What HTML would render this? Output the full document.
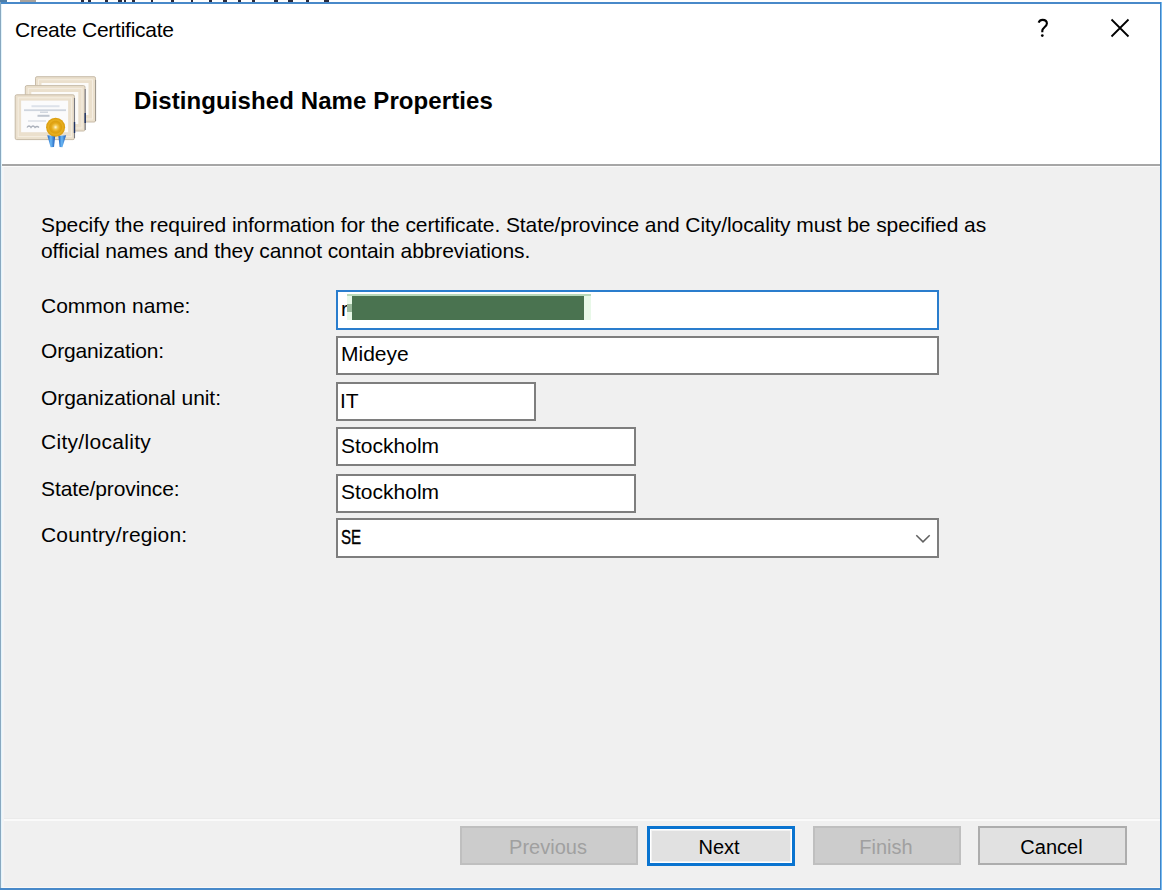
<!DOCTYPE html>
<html><head><meta charset="utf-8">
<style>
html,body{margin:0;padding:0;}
body{width:1162px;height:892px;position:relative;overflow:hidden;background:#fff;font-family:"Liberation Sans",sans-serif;color:#000;}
.a{position:absolute;}
.t{position:absolute;white-space:nowrap;line-height:21px;font-size:21px;}
.box{position:absolute;box-sizing:border-box;background:#fff;border:2px solid #7e7e7e;}
.btn{position:absolute;box-sizing:border-box;font-size:20px;line-height:20px;text-align:center;}
</style></head><body>
<!-- top strip remnants -->
<div class="a" style="left:0;top:0;width:7px;height:2px;background:#4f7fa8"></div>
<div class="a" style="left:20px;top:0;width:16px;height:2px;background:#a8a29c"></div>

<div class="a" style="left:81px;top:0;width:3px;height:2px;background:#2a2a3a"></div><div class="a" style="left:88px;top:0;width:3px;height:2px;background:#2a2a3a"></div><div class="a" style="left:105px;top:0;width:3px;height:2px;background:#2a2a3a"></div><div class="a" style="left:118px;top:0;width:4px;height:2px;background:#2a2a3a"></div><div class="a" style="left:124px;top:0;width:2px;height:2px;background:#2a2a3a"></div><div class="a" style="left:132px;top:0;width:3px;height:2px;background:#2a2a3a"></div><div class="a" style="left:151px;top:0;width:2px;height:2px;background:#2a2a3a"></div><div class="a" style="left:171px;top:0;width:3px;height:2px;background:#2a2a3a"></div><div class="a" style="left:191px;top:0;width:2px;height:2px;background:#2a2a3a"></div><div class="a" style="left:209px;top:0;width:3px;height:2px;background:#2a2a3a"></div><div class="a" style="left:223px;top:0;width:4px;height:2px;background:#2a2a3a"></div><div class="a" style="left:238px;top:0;width:3px;height:2px;background:#2a2a3a"></div><div class="a" style="left:252px;top:0;width:3px;height:2px;background:#2a2a3a"></div><div class="a" style="left:274px;top:0;width:4px;height:2px;background:#2a2a3a"></div><div class="a" style="left:288px;top:0;width:5px;height:2px;background:#2a2a3a"></div><div class="a" style="left:306px;top:0;width:3px;height:2px;background:#2a2a3a"></div><div class="a" style="left:324px;top:0;width:5px;height:2px;background:#2a2a3a"></div>
<!-- window frame -->
<div class="a" style="left:0;top:2px;width:1161px;height:2px;background:#4889c9"></div>
<div class="a" style="left:0;top:2px;width:1px;height:888px;background:#88a8c0"></div>
<div class="a" style="left:1px;top:4px;width:1px;height:884px;background:#e2f4fc"></div>
<div class="a" style="left:1160px;top:2px;width:1px;height:888px;background:#3f84c6"></div>
<div class="a" style="left:1161px;top:2px;width:1px;height:888px;background:#78bcf2"></div>
<div class="a" style="left:0;top:888px;width:1161px;height:2px;background:#4889c9"></div>

<!-- body gray -->
<div class="a" style="left:2px;top:164px;width:1158px;height:2px;background:#a6a6a6"></div>
<div class="a" style="left:2px;top:166px;width:1158px;height:1px;background:#fbfbfb"></div>
<div class="a" style="left:2px;top:167px;width:1158px;height:721px;background:#f0f0f0"></div>
<div class="a" style="left:2px;top:818px;width:1158px;height:1px;background:#ebebeb"></div><div class="a" style="left:2px;top:819px;width:1158px;height:2px;background:#fafafa"></div><div class="a" style="left:2px;top:887px;width:1158px;height:1px;background:#f8f8f8"></div><div class="a" style="left:2px;top:167px;width:2px;height:720px;background:#f4f4f6"></div>

<!-- title -->
<div class="t" id="title" style="left:15px;top:19px;font-size:21px;line-height:21px;letter-spacing:-0.26px;">Create Certificate</div>
<svg class="a" style="left:1100px;top:10px" width="40" height="40" viewBox="0 0 40 40">
<path d="M11.5 9.5 L28.5 26.5 M28.5 9.5 L11.5 26.5" stroke="#000" stroke-width="1.8" fill="none"/>
</svg>
<svg class="a" style="left:1030px;top:14px" width="24" height="28" viewBox="1030 14 24 28">
<path d="M1038.6 22.6 C1039.3 20.9 1040.7 19.9 1042.6 19.9 C1045.1 19.9 1046.9 21.4 1046.9 23.6 C1046.9 26.6 1042.3 27.4 1042.3 30.8 L1042.3 32.2" stroke="#000" stroke-width="2.1" fill="none"/>
<circle cx="1042.3" cy="35.6" r="1.35" fill="#000"/>
</svg>


<!-- cert icon -->
<svg class="a" style="left:0;top:60px" width="110" height="95" viewBox="0 60 110 95">
<defs>
<radialGradient id="gold" cx="0.5" cy="0.5" r="0.5">
<stop offset="0" stop-color="#fff6d8"/><stop offset="0.22" stop-color="#f2c850"/><stop offset="0.45" stop-color="#e4a818"/><stop offset="0.62" stop-color="#dca010"/><stop offset="0.75" stop-color="#e8b020"/><stop offset="1" stop-color="#d89a0c"/>
</radialGradient>
<linearGradient id="rib" x1="0" y1="0" x2="1" y2="0">
<stop offset="0" stop-color="#1c5fc0"/><stop offset="0.45" stop-color="#6ab8f4"/><stop offset="1" stop-color="#1a58b8"/>
</linearGradient>
</defs>
<g>
<rect x="35.5" y="76.7" width="60" height="45.3" rx="1.5" fill="#ebe0cd" stroke="#c8bca9" stroke-width="1"/>
<rect x="38.5" y="79.7" width="54" height="39.3" fill="none" stroke="#f5eee2" stroke-width="1"/><rect x="41.5" y="83" width="47" height="32" fill="#fcfbf9"/>
<line x1="95.6" y1="80" x2="95.6" y2="121" stroke="#9a948c" stroke-width="1"/>
</g>
<g>
<rect x="25.3" y="85.6" width="59.7" height="45.4" rx="1.5" fill="#ebe0cd" stroke="#c8bca9" stroke-width="1"/>
<rect x="28.3" y="88.6" width="53.7" height="39.4" fill="none" stroke="#f5eee2" stroke-width="1"/><rect x="31.3" y="92" width="47" height="32" fill="#fcfbf9"/>
<line x1="85.2" y1="89" x2="85.2" y2="130" stroke="#7a7a80" stroke-width="1.1"/>
<line x1="85.2" y1="113" x2="85.2" y2="123" stroke="#1e3262" stroke-width="1.4"/>
</g>
<g>
<rect x="15.2" y="94.8" width="59.2" height="44.8" rx="1.5" fill="#ebe0cd" stroke="#c6baa6" stroke-width="1"/>
<rect x="18.2" y="97.8" width="53.2" height="38.8" fill="none" stroke="#f5eee2" stroke-width="1"/><rect x="21.1" y="100.6" width="47" height="31.6" fill="#fbfbfc"/>
<line x1="74.5" y1="98" x2="74.5" y2="138" stroke="#7a7a80" stroke-width="1.1"/>
<line x1="74.5" y1="122" x2="74.5" y2="133" stroke="#1e3262" stroke-width="1.4"/>
<rect x="31.5" y="105.2" width="28" height="2" fill="#dde2ea"/>
<rect x="24" y="109.3" width="42" height="1.8" fill="#cfd5de"/>
<rect x="40" y="111.6" width="8" height="1.2" fill="#c8ced8"/>
<rect x="37.5" y="114.8" width="12" height="2" fill="#bfc5cf"/>
<rect x="28" y="120.2" width="18" height="1.6" fill="#dde0e6"/>
<path d="M27 127.5 q2 -3 4 0 q2 -3 4 0 q2 -2 4 0" stroke="#aab0ba" stroke-width="1.3" fill="none"/>
</g>
<path d="M47.3 135.2 L55.2 136 L54 147 L50.6 147.3 Z" fill="url(#rib)"/>
<path d="M58.4 136 L66.1 135.2 L62.4 147.3 L59.6 147 Z" fill="url(#rib)"/>
<circle cx="55.6" cy="127.2" r="9.5" fill="url(#gold)"/>
</svg>

<!-- header -->
<div class="t" id="hdr" style="left:134px;top:89px;font-size:24px;line-height:24px;font-weight:bold;letter-spacing:0.1px;">Distinguished Name Properties</div>

<!-- paragraph -->
<div class="t" id="p1" style="left:41px;top:214px;letter-spacing:-0.08px;">Specify the required information for the certificate. State/province and City/locality must be specified as</div>
<div class="t" id="p2" style="left:41px;top:240px;letter-spacing:-0.08px;">official names and they cannot contain abbreviations.</div>

<!-- labels -->
<div class="t" style="left:41px;top:295px;">Common name:</div>
<div class="t" style="left:41px;top:340px;letter-spacing:-0.15px">Organization:</div>
<div class="t" style="left:41px;top:387px;letter-spacing:-0.05px">Organizational unit:</div>
<div class="t" style="left:41px;top:431px;letter-spacing:0.3px">City/locality</div>
<div class="t" style="left:41px;top:478px;letter-spacing:-0.1px">State/province:</div>
<div class="t" style="left:41px;top:524px;letter-spacing:0.18px">Country/region:</div>

<!-- inputs -->
<div class="box" style="left:336px;top:290px;width:603px;height:40px;border-color:#2a7dcd"></div>
<div class="box" style="left:336px;top:336px;width:603px;height:39px;"></div>
<div class="box" style="left:336px;top:382px;width:200px;height:39px;"></div>
<div class="box" style="left:336px;top:427px;width:300px;height:39px;"></div>
<div class="box" style="left:336px;top:474px;width:300px;height:39px;"></div>
<div class="box" style="left:336px;top:518px;width:603px;height:40px;"></div>

<div class="t" style="left:341px;top:298px;">r</div>
<div class="a" style="left:347px;top:294px;width:244px;height:2px;background:#b9d9bb"></div>
<div class="a" style="left:347px;top:296px;width:244px;height:24px;background:#e8f8e8"></div>
<div class="a" style="left:347px;top:304px;width:5px;height:8px;background:#9cba9e"></div>
<div class="a" style="left:352px;top:296px;width:232px;height:24px;background:#4a7350"></div>

<div class="t" style="left:341px;top:343px;">Mideye</div>
<div class="t" style="left:340px;top:390px;">IT</div>
<div class="t" style="left:341px;top:435px;">Stockholm</div>
<div class="t" style="left:341px;top:481px;">Stockholm</div>
<div class="t" style="left:341px;top:526px;transform:scaleX(0.72);transform-origin:0 0;-webkit-text-stroke:0.4px #000;">SE</div>
<svg class="a" style="left:900px;top:520px" width="36" height="36" viewBox="0 0 36 36">
<path d="M16.3 15.2 L23 21.9 L29.7 15.2" stroke="#606060" stroke-width="1.5" fill="none"/>
</svg>

<!-- buttons -->
<div class="btn" style="left:460px;top:826px;width:178px;height:39px;background:#cccccc;border:2px solid #bfbfbf;color:#a0a0a0;padding-top:9px;"><span style="position:relative;left:-1px">Previous</span></div>
<div class="btn" style="left:647px;top:826px;width:148px;height:40px;background:#e1e1e1;border:3px solid #0a74d0;box-shadow:inset 0 0 0 1px #fff,inset 0 0 0 2px #f2f2f2;color:#000;padding-top:8px;"><span style="position:relative;left:-2px">Next</span></div>
<div class="btn" style="left:813px;top:826px;width:148px;height:39px;background:#cccccc;border:2px solid #bfbfbf;color:#a0a0a0;padding-top:9px;"><span style="position:relative;left:-1px">Finish</span></div>
<div class="btn" style="left:978px;top:826px;width:149px;height:39px;background:#e1e1e1;border:2px solid #adadad;color:#000;padding-top:9px;"><span style="position:relative;left:-1px">Cancel</span></div>

</body></html>
